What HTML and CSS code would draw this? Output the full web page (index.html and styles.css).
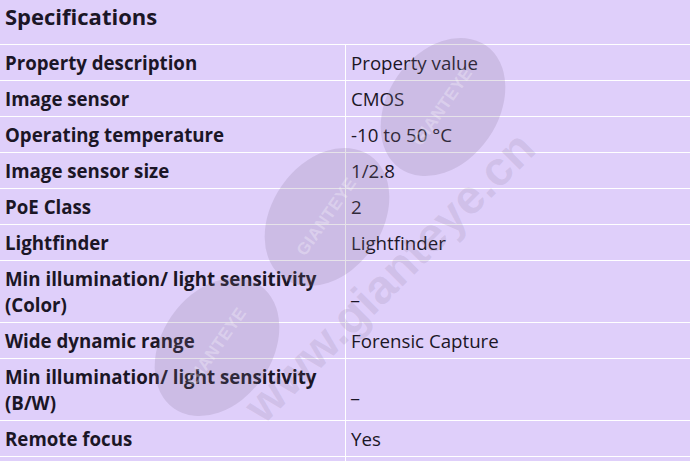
FILE: index.html
```html
<!DOCTYPE html>
<html>
<head>
<meta charset="utf-8">
<link rel="stylesheet" href="styles.css">
</head>
<body>
<div class="page">
  <h2 class="title">Specifications</h2>
  <table class="specs">
    <tr><th>Property description</th><td>Property value</td></tr>
    <tr><th>Image sensor</th><td>CMOS</td></tr>
    <tr><th>Operating temperature</th><td>-10 to 50 °C</td></tr>
    <tr><th>Image sensor size</th><td>1/2.8</td></tr>
    <tr><th>PoE Class</th><td>2</td></tr>
    <tr><th>Lightfinder</th><td>Lightfinder</td></tr>
    <tr><th>Min illumination/ light sensitivity (Color)</th><td>_</td></tr>
    <tr><th>Wide dynamic range</th><td>Forensic Capture</td></tr>
    <tr><th>Min illumination/ light sensitivity (B/W)</th><td>_</td></tr>
    <tr><th>Remote focus</th><td>Yes</td></tr>
    <tr><th>&nbsp;</th><td>&nbsp;</td></tr>
  </table>
  <div class="wm">
    <div class="seal seal1"><span>GIANTEYE</span></div>
    <div class="seal seal2"><span>GIANTEYE</span></div>
    <div class="seal seal3"><span>GIANTEYE</span></div>
    <div class="url">www.gianteye.cn</div>
  </div>
</div>
</body>
</html>
```
FILE: styles.css
```css
html, body {
  margin: 0;
  padding: 0;
  background: #dfcffa;
}
.page {
  position: relative;
  width: 690px;
  height: 461px;
  overflow: hidden;
  font-family: "Open Sans", "Noto Sans", sans-serif;
  color: #1b1626;
}
.title {
  margin: 0;
  height: 44px;
  padding: 0 5px;
  font-size: 22px;
  line-height: 33px;
  font-weight: 700;
}
.specs {
  width: 690px;
  border-collapse: collapse;
  table-layout: fixed;
  border-top: 1px solid #fff;
}
.specs th, .specs td {
  border-bottom: 1px solid #fff;
  padding: 5px 5px 4px 5px;
  font-size: 18.7px;
  line-height: 26px;
  text-align: left;
  vertical-align: middle;
}
.specs th {
  width: 335px;
  font-weight: 700;
  border-right: 1px solid #fff;
}
.specs td {
  font-weight: 400;
}
.wm {
  position: absolute;
  inset: 0;
  pointer-events: none;
}
.seal {
  position: absolute;
  width: 150px;
  height: 110px;
  border-radius: 50%;
  background: rgba(130, 115, 145, 0.2);
  transform: rotate(-55deg);
  display: flex;
  align-items: center;
  justify-content: center;
}
.seal span {
  font-family: "Liberation Sans", sans-serif;
  font-weight: 700;
  font-size: 17px;
  color: rgba(255, 255, 255, 0.3);
  letter-spacing: 0.5px;
}
.seal1 { left: 368px; top: 52px; }
.seal2 { left: 252px; top: 162px; }
.seal3 { left: 142px; top: 292px; }
.url {
  position: absolute;
  left: 195px;
  top: 247px;
  width: 393px;
  line-height: 56px;
  font-family: "Liberation Sans", sans-serif;
  font-weight: 700;
  font-size: 48px;
  color: rgba(130, 115, 145, 0.16);
  transform: rotate(-45deg);
  white-space: nowrap;
}
```
